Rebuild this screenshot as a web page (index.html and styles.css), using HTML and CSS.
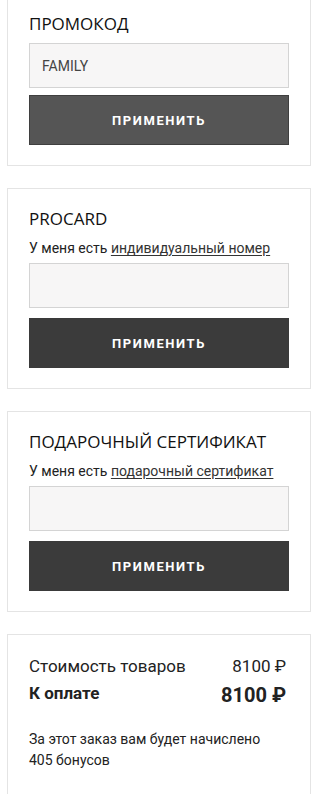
FILE: index.html
```html
<!DOCTYPE html>
<html lang="ru">
<head>
  <meta charset="UTF-8" />
  <title>Корзина</title>
  <meta name="viewport" content="width=device-width, initial-scale=1.0" />
  <link rel="stylesheet" href="styles.css">
</head>
<body>

  <div class="cart-side">

    <div class="box box-first">
      <h3 class="box-title">ПРОМОКОД</h3>
      <input class="box-input" type="text" value="FAMILY" />
      <button class="box-btn box-btn-hover box-btn-tight">ПРИМЕНИТЬ</button>
    </div>

    <div class="box">
      <h3 class="box-title">PROCARD</h3>
      <p class="box-note">У меня есть <a href="#">индивидуальный номер</a></p>
      <input class="box-input" type="text" value="" />
      <button class="box-btn">ПРИМЕНИТЬ</button>
    </div>

    <div class="box">
      <h3 class="box-title">ПОДАРОЧНЫЙ СЕРТИФИКАТ</h3>
      <p class="box-note">У меня есть <a href="#">подарочный сертификат</a></p>
      <input class="box-input" type="text" value="" />
      <button class="box-btn">ПРИМЕНИТЬ</button>
    </div>

    <!-- итого -->
    <div class="box box-total">
      <div class="total-row">
        <span>Стоимость товаров</span>
        <span>8100 ₽</span>
      </div>
      <div class="total-row total-pay">
        <span>К оплате</span>
        <span class="total-sum">8100 ₽</span>
      </div>
      <p class="total-bonus">За этот заказ вам будет начислено 405 бонусов</p>
    </div>

  </div>

</body>
</html>
```

FILE: styles.css
```css
* {
  box-sizing: border-box;
}

body {
  margin: 0;
  background: #fff;
  font-family: Roboto, "Liberation Sans", sans-serif;
  color: #222;
}

.cart-side {
  display: flex;
  flex-direction: column;
  gap: 22px;
  padding: 0 7px;
}

.box {
  display: flex;
  flex-direction: column;
  border: 1px solid #e4e4e4;
  padding: 18px 21px 20px;
}

.box-first {
  margin-top: -7px;
}

.box-title {
  margin: 0 0 7px;
  font-family: "Open Sans", "Noto Sans", sans-serif;
  font-size: 17px;
  font-weight: 400;
  line-height: 24px;
  color: #111;
}

.box-note {
  margin: 0 0 5px;
  font-size: 14px;
  line-height: 20px;
  color: #222;
}

.box-note a {
  color: #333;
  text-decoration: underline;
  text-underline-offset: 2px;
}

.box-input {
  display: block;
  width: 100%;
  height: 45px;
  padding: 0 12px;
  border: 1px solid #d4d4d4;
  background: #f7f6f6;
  font-family: Roboto, sans-serif;
  font-size: 14px;
  color: #444;
  outline: none;
}

.box-btn {
  display: block;
  width: 100%;
  height: 50px;
  margin-top: 10px;
  border: 1px solid #3a3a3a;
  background: #3b3b3b;
  color: #fff;
  font-family: Roboto, sans-serif;
  font-size: 13px;
  font-weight: 700;
  letter-spacing: 1.6px;
  cursor: pointer;
}

.box-btn-hover {
  background: #555;
  border-color: #3f3f3f;
}

.box-btn-tight {
  margin-top: 7px;
}

/* итого */
.box-total {
  padding: 20px 24px 60px 21px;
}

.total-row {
  display: flex;
  justify-content: space-between;
  align-items: flex-start;
  font-size: 17px;
  line-height: 22px;
}

.total-pay {
  margin-top: 5px;
  font-weight: 700;
}

.total-sum {
  font-size: 20px;
  line-height: 26px;
}

.total-bonus {
  margin: 21px 0 0;
  font-size: 14px;
  line-height: 21px;
  max-width: 240px;
}
```
